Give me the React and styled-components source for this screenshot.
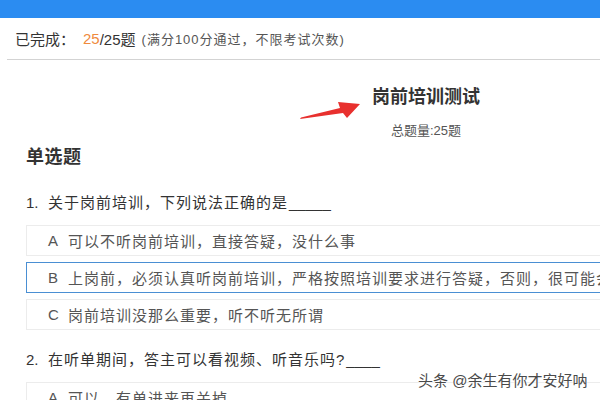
import React from "react";
import styled, { createGlobalStyle } from "styled-components";

const GlobalStyle = createGlobalStyle`
  html, body {
    margin: 0;
    padding: 0;
    background: #ffffff;
    overflow: hidden;
  }
  body {
    width: 600px;
    height: 400px;
    font-family: "Liberation Sans", "Noto Sans CJK SC", sans-serif;
    color: #333;
  }
`;

const Page = styled.div`
  position: relative;
  width: 600px;
  height: 400px;
  overflow: hidden;
`;

const TopBar = styled.div`
  height: 18px;
  background: #2b8cf1;
`;

const StatusBar = styled.div`
  height: 41px;
  margin-left: 7px;
  padding-left: 8px;
  display: flex;
  align-items: center;
  border-bottom: 1px solid #d3d3d3;
  font-size: 15px;
  color: #333;
  white-space: nowrap;
`;

const Done = styled.span`
  color: #f08a3d;
  margin-left: 8px;
`;

const Note = styled.span`
  font-size: 13px;
  color: #555;
  margin-left: 6px;
  letter-spacing: 1px;
`;

const Paper = styled.div`
  width: 800px;
  padding: 0 26px;
  display: flex;
  flex-direction: column;
`;

const Title = styled.h1`
  margin: 25px 0 0;
  text-align: center;
  font-size: 18px;
  line-height: 24px;
  font-weight: 700;
  color: #333;
`;

const SubTitle = styled.div`
  margin-top: 13px;
  text-align: center;
  font-size: 13px;
  line-height: 18px;
  color: #555;
`;

const Section = styled.h2`
  margin: 5px 0 0;
  font-size: 18px;
  line-height: 24px;
  font-weight: 700;
  color: #333;
  letter-spacing: 0.5px;
`;

const Question = styled.div`
  margin-top: ${(p) => p.$gap}px;
  margin-bottom: 11px;
  font-size: 15px;
  line-height: 22px;
  letter-spacing: 1px;
  color: #333;
  white-space: nowrap;
  display: flex;
`;

const QNum = styled.span`
  width: 22px;
  letter-spacing: 0;
`;

const Blank = styled.span`
  letter-spacing: 0;
  margin-left: 1px;
`;

const Options = styled.div`
  display: flex;
  flex-direction: column;
  gap: 6px;
`;

const Option = styled.div`
  height: 31px;
  box-sizing: border-box;
  border: 1px solid ${(p) => (p.$active ? "#4a8fd3" : "#ececec")};
  display: flex;
  align-items: center;
  padding-left: 21px;
  font-size: 15px;
  letter-spacing: 1px;
  color: #555;
  white-space: nowrap;
`;

const Letter = styled.span`
  width: 20px;
  letter-spacing: 0;
`;

const ArrowSvg = styled.svg`
  position: absolute;
  left: 296px;
  top: 98px;
`;

const Watermark = styled.div`
  position: absolute;
  left: 418px;
  top: 371px;
  font-size: 15px;
  line-height: 20px;
  color: #4a4a4a;
  white-space: nowrap;
  text-shadow: 0 0 2px #fff, 0 0 2px #fff, 0 0 1px #fff;
`;

export default function App() {
  return (
    <Page>
      <GlobalStyle />
      <TopBar />
      <StatusBar>
        已完成：<Done>25</Done>/25题
        <Note>(满分100分通过，不限考试次数)</Note>
      </StatusBar>
      <Paper>
        <Title>岗前培训测试</Title>
        <SubTitle>总题量:25题</SubTitle>
        <Section>单选题</Section>
        <Question $gap={23}>
          <QNum>1.</QNum>关于岗前培训，下列说法正确的是<Blank>_____</Blank>
        </Question>
        <Options>
          <Option>
            <Letter>A</Letter>可以不听岗前培训，直接答疑，没什么事
          </Option>
          <Option $active>
            <Letter>B</Letter>上岗前，必须认真听岗前培训，严格按照培训要求进行答疑，否则，很可能会被投诉
          </Option>
          <Option>
            <Letter>C</Letter>岗前培训没那么重要，听不听无所谓
          </Option>
        </Options>
        <Question $gap={19}>
          <QNum>2.</QNum>在听单期间，答主可以看视频、听音乐吗?<Blank>____</Blank>
        </Question>
        <Options>
          <Option>
            <Letter>A</Letter>可以，有单进来再关掉
          </Option>
        </Options>
      </Paper>
      <ArrowSvg width="70" height="26" viewBox="0 0 70 26">
        <polygon
          points="4,21 5,19.5 44,10 42,4 64,6 51,20 47,15"
          fill="#e8302e"
        />
      </ArrowSvg>
      <Watermark>头条 @余生有你才安好呐</Watermark>
    </Page>
  );
}
